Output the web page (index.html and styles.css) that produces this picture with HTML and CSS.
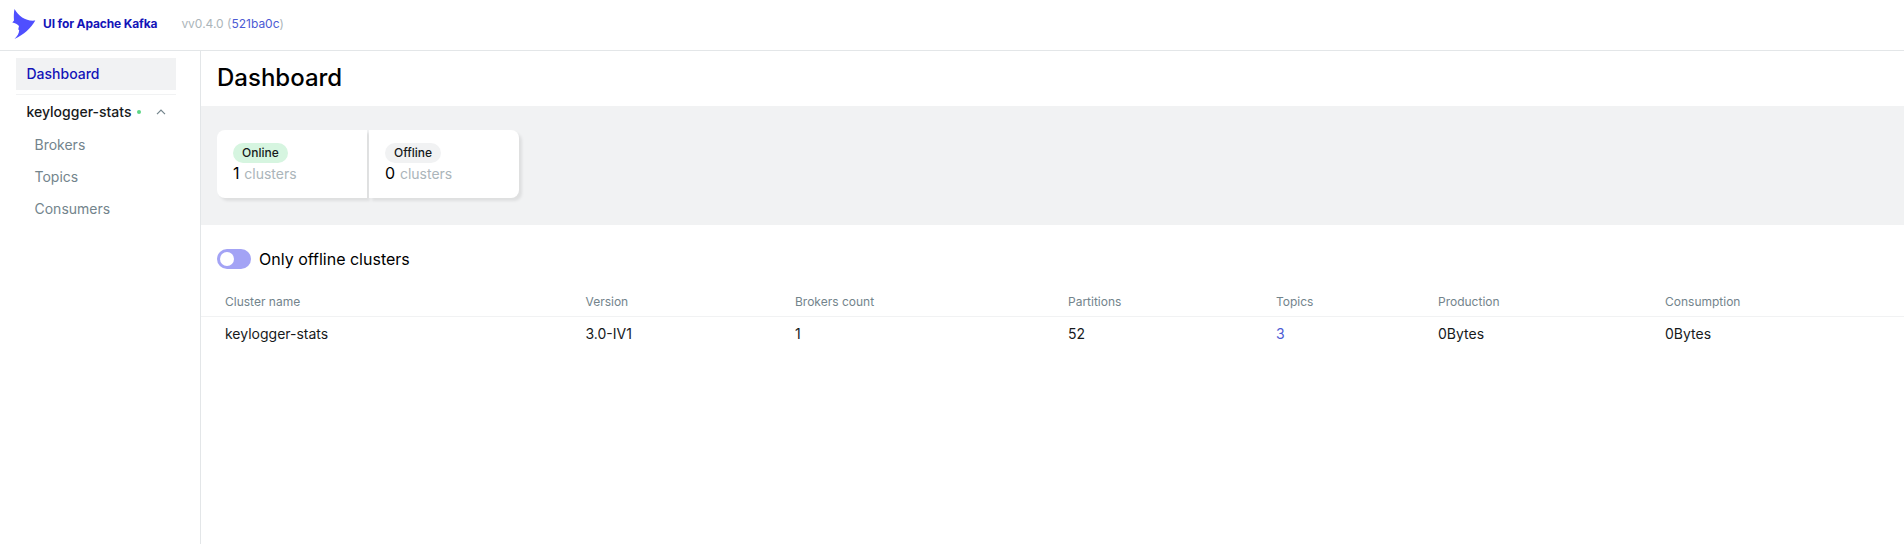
FILE: index.html
```html
<!DOCTYPE html>
<html lang="en">
<head>
<meta charset="utf-8">
<title>UI for Apache Kafka</title>
<link rel="stylesheet" href="styles.css">
</head>
<body>
<header class="navbar">
  <a class="brand">
    <svg class="logo" width="24" height="32" viewBox="0 0 24 32"><path d="M2.500 1C7 8.500 14 13.500 23.300 12.500C19 20 12 26.500 2.500 31C5.500 28 7 25.500 7.200 22L6.200 21.500L7 18C5.500 16 3 15 .3 14.500L2 12.500C1.700 9 1.700 5 2.500 1Z" fill="#4f4fff"/></svg>
    <span class="brand-name">UI for Apache Kafka</span>
  </a>
  <div class="version">vv0.4.0 (<a>521ba0c</a>)</div>
</header>
<div class="layout">
  <nav class="sidebar">
    <a class="item active">Dashboard</a>
    <div class="cluster">
      <div class="cluster-head">
        <span class="cluster-name">keylogger-stats</span>
        <svg class="status" width="4" height="4" viewBox="0 0 4 4"><circle cx="2" cy="2" r="2" fill="#5cd685"/></svg>
        <svg class="chevron" width="10" height="6" viewBox="0 0 10 6"><path d="M1 5.200L5 1.200L9 5.200" fill="none" stroke="#73848c" stroke-width="1.200"/></svg>
      </div>
      <a class="item sub">Brokers</a>
      <a class="item sub">Topics</a>
      <a class="item sub">Consumers</a>
    </div>
  </nav>
  <main class="content">
    <h1 class="title">Dashboard</h1>
    <section class="metrics">
      <div class="card first"><span class="tag green">Online</span><div class="value">1 <span>clusters</span></div></div>
      <div class="card last"><span class="tag">Offline</span><div class="value">0 <span>clusters</span></div></div>
    </section>
    <div class="filter"><span class="switch"><span class="knob"></span></span><label>Only offline clusters</label></div>
    <table class="table">
      <colgroup><col class="c1"><col class="c2"><col class="c3"><col class="c4"><col class="c5"><col class="c6"><col></colgroup>
      <thead><tr><th>Cluster name</th><th>Version</th><th>Brokers count</th><th>Partitions</th><th>Topics</th><th>Production</th><th>Consumption</th></tr></thead>
      <tbody><tr><td>keylogger-stats</td><td>3.0-IV1</td><td>1</td><td>52</td><td><a class="link">3</a></td><td>0Bytes</td><td>0Bytes</td></tr></tbody>
    </table>
  </main>
</div>
</body>
</html>
```

FILE: styles.css
```css
* { box-sizing: border-box; }
body {
  margin: 0;
  min-height: 544px;
  display: flex;
  flex-direction: column;
  background: #fff;
  color: #171a1c;
  font-family: Inter, sans-serif;
  font-size: 14px;
  line-height: 20px;
}
.navbar {
  display: flex;
  align-items: center;
  height: 51px;
  padding: 0 12px 2px;
  border-bottom: 1px solid #e3e6e8;
}
.brand { display: flex; align-items: center; gap: 7px; }
.brand-name { color: #1414b8; font-size: 12px; font-weight: 700; letter-spacing: -0.14px; }
.version { margin-left: 24px; font-size: 12px; color: #abb5ba; }
.version a, .link { color: #4c5bd4; }
.layout { display: flex; flex: 1; }
.sidebar {
  width: 201px;
  padding: 7px 24px 0 16px;
  border-right: 1px solid #e3e6e8;
}
.item { display: flex; align-items: center; height: 32px; padding: 0 10.5px; font-weight: 500; }
.active { background: #f1f2f3; color: #1414b8; }
.cluster { margin-top: 4px; border-top: 1px solid #f1f2f3; }
.cluster-head { display: flex; align-items: center; height: 34px; padding: 0 10px 0 10.5px; font-weight: 500; }
.status { margin-left: 5.5px; }
.chevron { margin-left: auto; }
.sub { padding-left: 18.5px; color: #73848c; font-weight: 400; }
.content { flex: 1; min-width: 0; }
.title {
  display: flex;
  align-items: center;
  height: 55px;
  margin: 0;
  padding: 0 16px 2px;
  font-size: 24px;
  font-weight: 500;
  line-height: 32px;
  color: #000;
}
.metrics { display: flex; gap: 2px; height: 119px; padding: 24px 16px; background: #f1f2f3; }
.card {
  width: 150px;
  height: 68px;
  padding: 13px 16px;
  background: #fff;
  box-shadow: 3px 3px 3px rgba(0, 0, 0, 0.08);
}
.first { border-radius: 8px 0 0 8px; }
.last { border-radius: 0 8px 8px 0; }
.tag {
  display: block;
  width: fit-content;
  height: 20px;
  padding: 0 9px;
  border-radius: 10px;
  background: #f1f2f3;
  font-size: 12px;
  font-weight: 500;
}
.green { background: #d6f5e0; }
.value { font-size: 16px; line-height: 21px; color: #000; }
.value span { margin-left: 0.3px; font-size: 14px; color: #abb5ba; }
.filter { display: flex; align-items: center; gap: 8px; padding: 24px 16px 23px; font-size: 16px; color: #000; }
.switch { display: flex; align-items: center; width: 34px; height: 20px; padding: 0 3px; border-radius: 10px; background: #a3a3f5; }
.knob { width: 14px; height: 14px; border-radius: 50%; background: #fff; }
.table { width: 100%; table-layout: fixed; border-collapse: collapse; }
.table th { height: 24px; padding: 0 8px 4px; border-bottom: 1px solid #f1f2f3; text-align: left; font-size: 12px; font-weight: 400; line-height: 16px; color: #73848c; }
.table td { height: 35px; padding: 0 8px; }
.table th:first-child, .table td:first-child { padding-left: 24px; }
.c1 { width: 376.500px; }
.c2 { width: 209.500px; }
.c3 { width: 273px; }
.c4 { width: 208px; }
.c5 { width: 162px; }
.c6 { width: 227px; }
```
